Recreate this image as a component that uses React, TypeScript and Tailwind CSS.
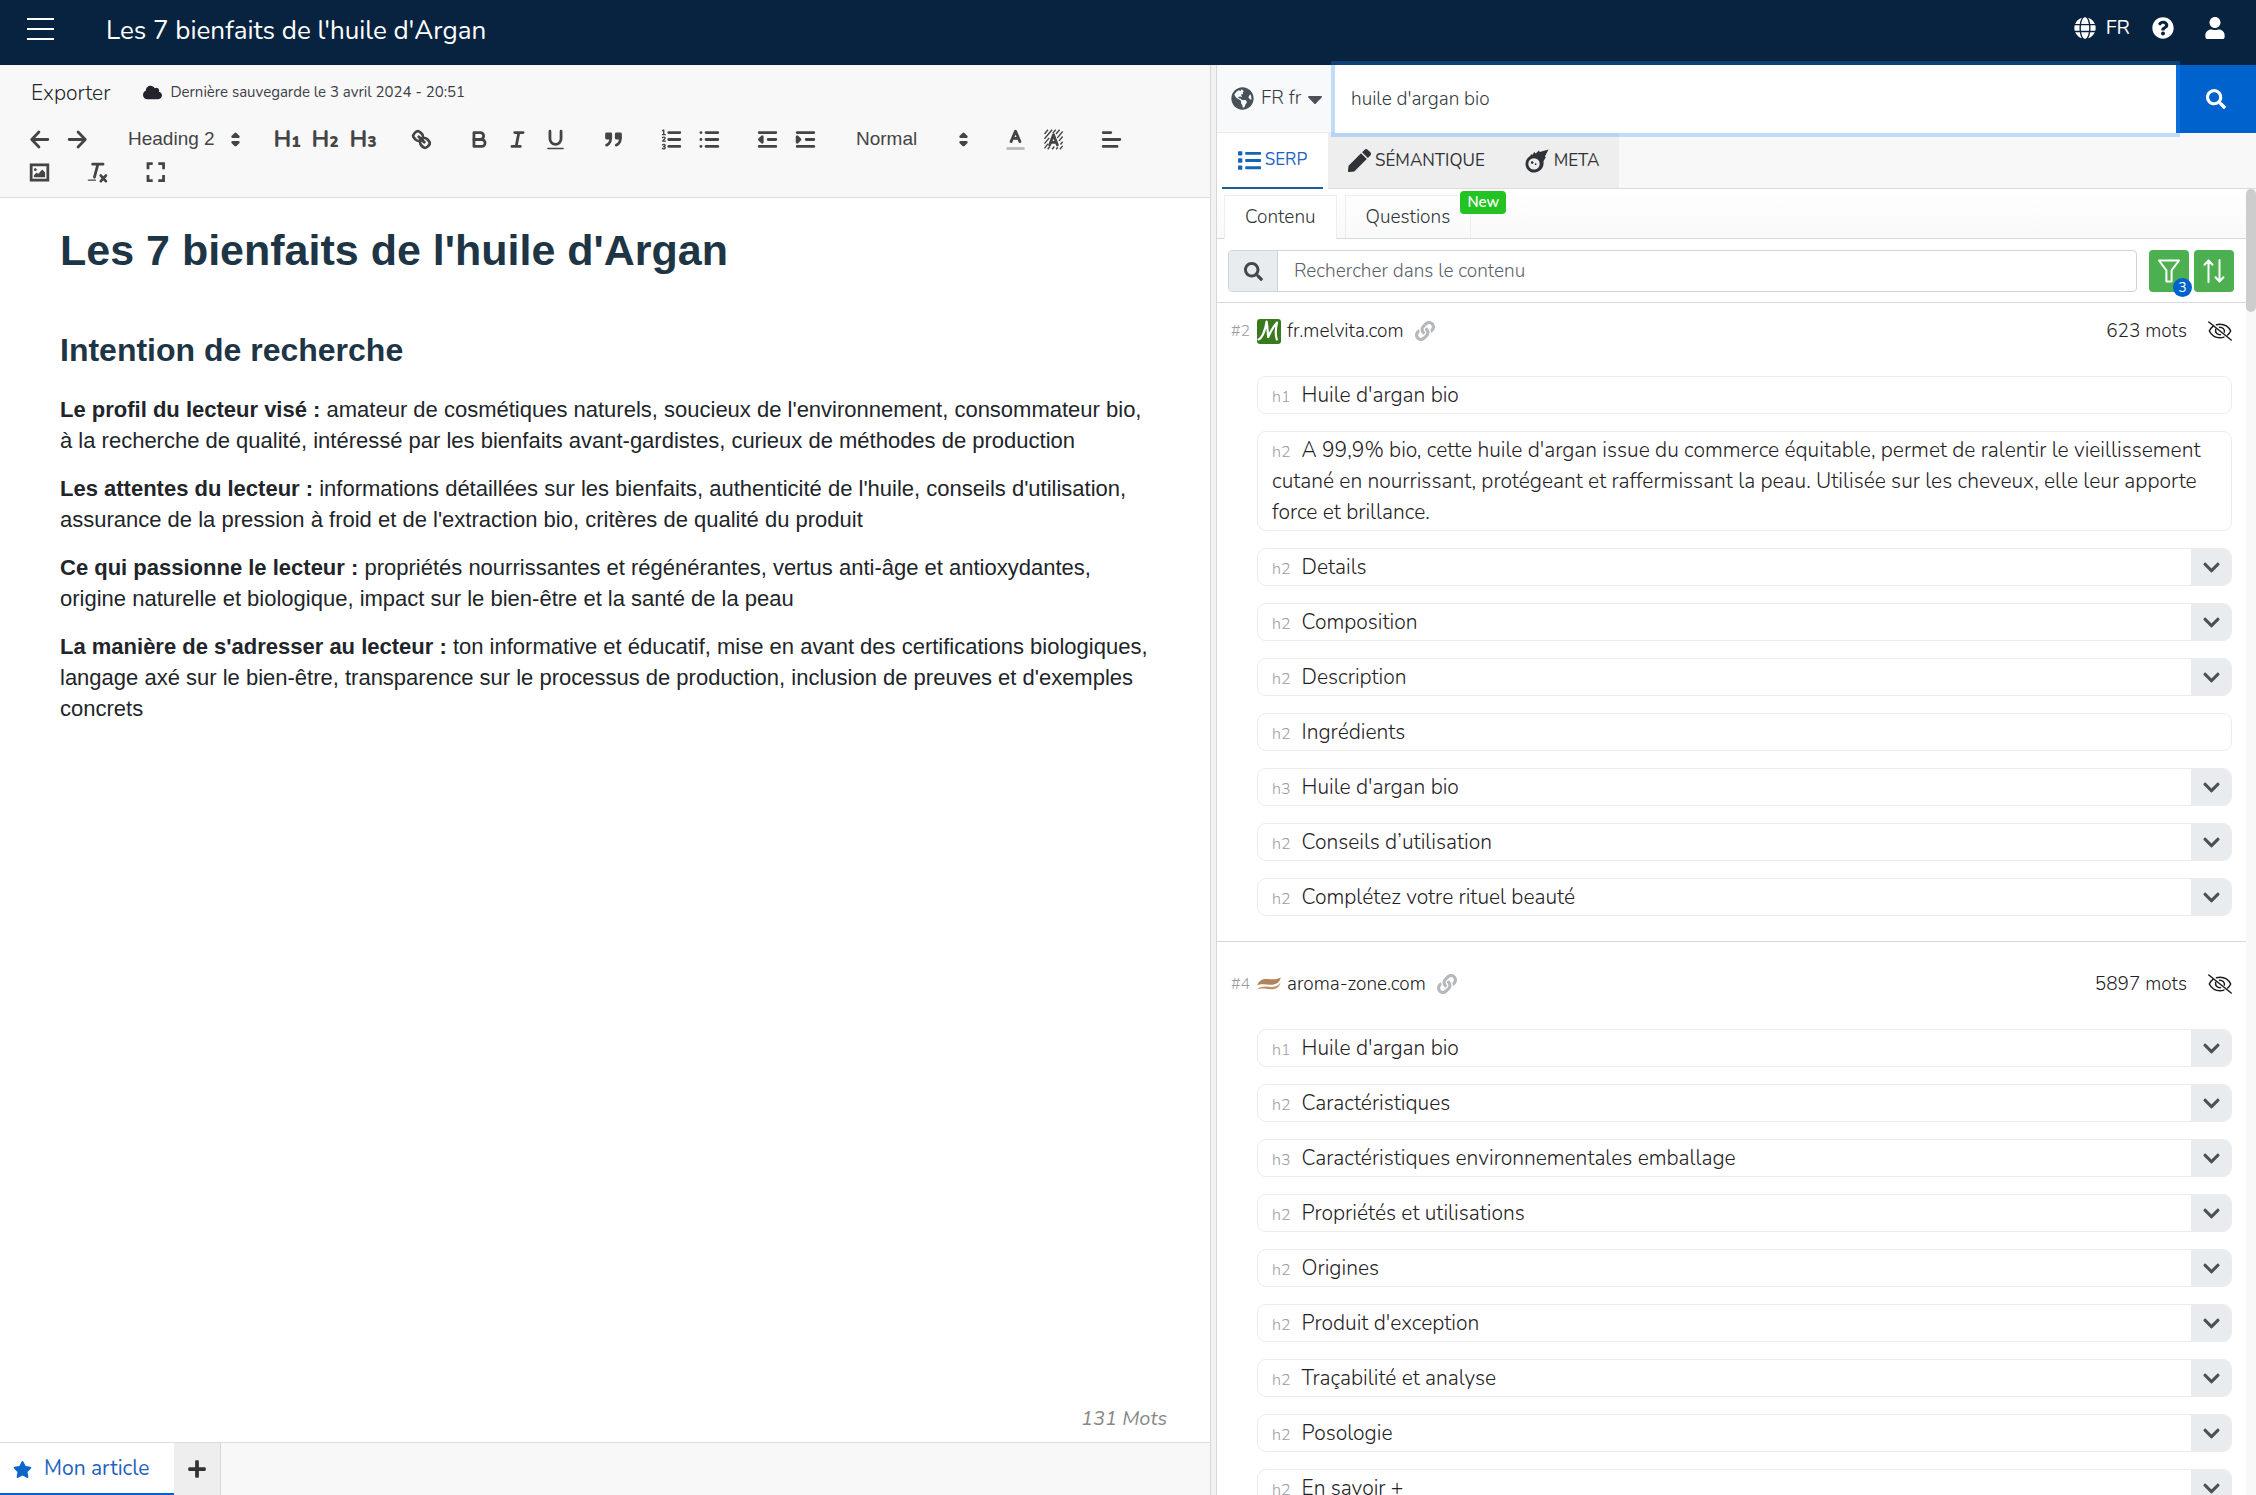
import type { ReactNode } from "react";
import {
  FaCaretDown,
  FaChevronDown,
  FaCloud,
  FaGlobe,
  FaGlobeAmericas,
  FaLink,
  FaList,
  FaPen,
  FaPlus,
  FaQuestionCircle,
  FaSearch,
  FaStar,
  FaUser,
} from "react-icons/fa";

/* ---------- Toolbar icons, drawn on an 18-unit grid ---------- */

function Glyph({ children }: { children: ReactNode }) {
  return (
    <svg
      viewBox="0 0 18 18"
      className="size-[25px] fill-none stroke-[#444] stroke-2"
      strokeLinecap="round"
      strokeLinejoin="round"
      aria-hidden="true"
    >
      {children}
    </svg>
  );
}

const solid = "fill-[#444] stroke-none";

const icons = {
  undo: (
    <Glyph>
      <path d="M15 9H3.8M8.6 3.6L3.4 9l5.2 5.4" />
    </Glyph>
  ),
  redo: (
    <Glyph>
      <path d="M3 9h11.2M9.4 3.6L14.6 9l-5.2 5.4" />
    </Glyph>
  ),
  link: (
    <Glyph>
      <path d="M7 7l4 4" />
      <path d="M8.9,4.577a3.476,3.476,0,0,1,.36,4.679A3.476,3.476,0,0,1,4.577,8.9C3.185,7.5,2.035,6.4,4.217,4.217S7.5,3.185,8.9,4.577Z" />
      <path d="M13.423,9.1a3.476,3.476,0,0,0-4.679-.36,3.476,3.476,0,0,0,.36,4.679c1.392,1.392,2.5,2.542,4.679.36S14.815,10.5,13.423,9.1Z" />
    </Glyph>
  ),
  bold: (
    <Glyph>
      <path d="M5,4H9.5A2.5,2.5,0,0,1,12,6.5v0A2.5,2.5,0,0,1,9.5,9H5Z" />
      <path d="M5,9h5.5A2.5,2.5,0,0,1,13,11.5v0A2.5,2.5,0,0,1,10.5,14H5Z" />
    </Glyph>
  ),
  italic: (
    <Glyph>
      <path d="M7 4h6M5 14h6M10 4L8 14" />
    </Glyph>
  ),
  underline: (
    <Glyph>
      <path d="M5,3V8.5a4,4,0,0,0,8,0V3" />
      <rect className={solid} x="3" y="15" width="12" height="1" rx="0.5" />
    </Glyph>
  ),
  quote: (
    <Glyph>
      <rect x="4" y="5" width="3" height="3" className="fill-[#444]" />
      <rect x="11" y="5" width="3" height="3" className="fill-[#444]" />
      <path d="M7,8c0,4.031-3,5-3,5M14,8c0,4.031-3,5-3,5" />
    </Glyph>
  ),
  ordered: (
    <Glyph>
      <path d="M7 4h8M7 9h8M7 14h8" />
      <path
        className="stroke-1"
        d="M2.5 2.6l.9-.4V5.4M2.5 5.5h2M2.5 7.7c.4-.6 1.9-.6 1.9.3 0 .7-1.3 1.1-1.8 2.2h2M2.5 12.8c.6-.5 1.9-.4 1.9.4 0 .6-.7.8-1.1.8.5 0 1.2.2 1.2.9 0 .9-1.4 1-2 .5"
      />
    </Glyph>
  ),
  bullet: (
    <Glyph>
      <path d="M6.5 4H15M6.5 9H15M6.5 14H15M2.8 4h.1M2.8 9h.1M2.8 14h.1" />
    </Glyph>
  ),
  outdent: (
    <Glyph>
      <path d="M3 4h12M3 14h12M9.5 9H15" />
      <path className="fill-[#444]" d="M5.2 7v4L3.2 9Z" />
    </Glyph>
  ),
  indent: (
    <Glyph>
      <path d="M3 4h12M3 14h12M9.5 9H15" />
      <path className="fill-[#444]" d="M3 7v4l2-2Z" />
    </Glyph>
  ),
  color: (
    <Glyph>
      <path d="M5.8 10.5L9 3l3.2 7.5M7 8.2h4" />
      <path className="stroke-[#bbb]" strokeLinecap="butt" d="M2.5 15.500h13" />
    </Glyph>
  ),
  background: (
    <Glyph>
      <path
        className="stroke-1"
        strokeLinecap="butt"
        d="M2.5 5l2.5-3M2.5 8.5L8 2M2.5 12l3.4-4.2M2.5 15.4L5 12.2M4.8 16l1.6-2M8.5 4.4L10.6 2M10.8 5L13.4 2M11.8 7.8L15.6 3.2M13 10l2.6-3.2M14 12.6l1.6-2M8 16l1.6-2M11 16l1-1.4M13.6 16l2-2.4"
      />
      <path d="M6.2 13L9 5.6l2.8 7.4M7.2 11h3.6" />
    </Glyph>
  ),
  align: (
    <Glyph>
      <path d="M3 4h5.5M3 9h12M3 14h10" />
    </Glyph>
  ),
  image: (
    <Glyph>
      <rect x="3" y="3.5" width="12" height="11" className="stroke-2" strokeLinejoin="miter" />
      <circle cx="6" cy="7" r="1" className={solid} />
      <path className={solid} d="M5 12.500V11l2-2 1 1 3-3.200 2 2.200v3.500Z" />
    </Glyph>
  ),
  clean: (
    <Glyph>
      <path d="M5.500 3H13M9.300 3L6.800 12.400" />
      <path d="M11.400 11.200l3.600 4M15 11.200l-3.600 4" />
      <rect className={solid} x="2" y="14" width="6" height="1" rx="0.5" />
    </Glyph>
  ),
  fullscreen: (
    <Glyph>
      <path
        strokeLinecap="butt"
        strokeLinejoin="miter"
        d="M3.600 6.600v-4H7M11 2.600h3.800v4M14.800 10.800v4H11M7 14.800H3.600v-4"
      />
    </Glyph>
  ),
};

function Tool({ label, children }: { label: string; children: ReactNode }) {
  return (
    <button type="button" aria-label={label} className="flex h-[33px] w-[38px] items-center justify-center text-[#444]">
      {children}
    </button>
  );
}

function Group({ children }: { children: ReactNode }) {
  return <div className="mr-5 flex items-center">{children}</div>;
}

function HeadingGlyph({ level }: { level: number }) {
  return (
    <span className="flex items-baseline leading-none">
      <span className="text-[23px] font-bold">H</span>
      <span className="text-[15px] font-black">{level}</span>
    </span>
  );
}

function Picker({ label, value }: { label: string; value: string }) {
  return (
    <div className="relative h-[33px] w-[132px]">
      <select
        aria-label={label}
        defaultValue={value}
        className="h-full w-full appearance-none bg-transparent pl-3 font-['Liberation_Sans',sans-serif] text-[19px] text-[#444]"
      >
        <option>{value}</option>
      </select>
      <svg viewBox="0 0 18 18" className="pointer-events-none absolute top-1 right-0 size-[25px] fill-[#444] stroke-[#444] stroke-2" strokeLinejoin="round" aria-hidden="true">
        <path d="M7 11l2 2 2-2ZM7 7l2-2 2 2Z" />
      </svg>
    </div>
  );
}

/* ---------- Left: article editor ---------- */

const paragraphs: [string, string][] = [
  [
    "Le profil du lecteur visé :",
    "amateur de cosmétiques naturels, soucieux de l'environnement, consommateur bio, à la recherche de qualité, intéressé par les bienfaits avant-gardistes, curieux de méthodes de production",
  ],
  [
    "Les attentes du lecteur :",
    "informations détaillées sur les bienfaits, authenticité de l'huile, conseils d'utilisation, assurance de la pression à froid et de l'extraction bio, critères de qualité du produit",
  ],
  [
    "Ce qui passionne le lecteur :",
    "propriétés nourrissantes et régénérantes, vertus anti-âge et antioxydantes, origine naturelle et biologique, impact sur le bien-être et la santé de la peau",
  ],
  [
    "La manière de s'adresser au lecteur :",
    "ton informative et éducatif, mise en avant des certifications biologiques, langage axé sur le bien-être, transparence sur le processus de production, inclusion de preuves et d'exemples concrets",
  ],
];

function Editor() {
  return (
    <section className="flex min-w-0 flex-[1210] flex-col bg-white">
      <div className="border-b border-[#dcdcdc] bg-[#f8f8f8] pb-2">
        <div className="flex h-[58px] items-center pb-1 pl-[31px] text-[#212529]">
          <button type="button" className="pt-1 text-[21px] font-light">Exporter</button>
          <FaCloud className="ml-[33px] size-[19px]" />
          <span className="ml-2 text-[15px] text-[#3c4146]">Dernière sauvegarde le 3 avril 2024 - 20:51</span>
        </div>
        <div className="flex pl-5">
          <Tool label="Annuler">{icons.undo}</Tool>
          <Tool label="Rétablir">{icons.redo}</Tool>
          <div className="mr-5 ml-5 flex">
            <Picker label="Titre" value="Heading 2" />
          </div>
          <Group>
            <Tool label="Titre 1"><HeadingGlyph level={1} /></Tool>
            <Tool label="Titre 2"><HeadingGlyph level={2} /></Tool>
            <Tool label="Titre 3"><HeadingGlyph level={3} /></Tool>
          </Group>
          <Group>
            <Tool label="Lien">{icons.link}</Tool>
          </Group>
          <Group>
            <Tool label="Gras">{icons.bold}</Tool>
            <Tool label="Italique">{icons.italic}</Tool>
            <Tool label="Souligné">{icons.underline}</Tool>
          </Group>
          <Group>
            <Tool label="Citation">{icons.quote}</Tool>
          </Group>
          <Group>
            <Tool label="Liste numérotée">{icons.ordered}</Tool>
            <Tool label="Liste à puces">{icons.bullet}</Tool>
          </Group>
          <Group>
            <Tool label="Diminuer le retrait">{icons.outdent}</Tool>
            <Tool label="Augmenter le retrait">{icons.indent}</Tool>
          </Group>
          <Group>
            <Picker label="Taille" value="Normal" />
          </Group>
          <Group>
            <Tool label="Couleur du texte">{icons.color}</Tool>
            <Tool label="Couleur de fond">{icons.background}</Tool>
          </Group>
          <Tool label="Alignement">{icons.align}</Tool>
        </div>
        <div className="flex pl-5">
          <Group>
            <Tool label="Image">{icons.image}</Tool>
          </Group>
          <Group>
            <Tool label="Effacer la mise en forme">{icons.clean}</Tool>
          </Group>
          <Tool label="Plein écran">{icons.fullscreen}</Tool>
        </div>
      </div>

      <article className="min-h-0 flex-1 overflow-hidden px-[60px] pt-6 font-['Liberation_Sans',sans-serif] text-[#212529]">
        <h1 className="text-[43px] leading-[56px] font-bold text-[#1e3545]">Les 7 bienfaits de l'huile d'Argan</h1>
        <h2 className="mt-[52px] text-[32px] leading-[40px] font-bold text-[#1e3545]">Intention de recherche</h2>
        <div className="mt-6 flex flex-col gap-[17px]">
          {paragraphs.map(([lead, text]) => (
            <p key={lead} className="text-[22px] leading-[31px]">
              <strong>{lead}</strong> {text}
            </p>
          ))}
        </div>
      </article>

      <p className="pr-[43px] pb-2 text-right text-[20px] text-[#888] italic">131 Mots</p>
      <div className="flex h-[53px] border-t border-[#d8dde0] bg-[#f8f8f8] text-[21px]">
        <button type="button" className="flex items-center border-b-2 border-[#0062cc] bg-white pt-[2px] pr-6 pl-[13px] text-[#1d62c0]">
          <FaStar className="mr-3 size-[19px] text-[#0b66cc]" />
          Mon article
        </button>
        <button type="button" aria-label="Ajouter" className="flex w-[47px] items-center justify-center border-r border-[#d8d8d8] bg-[#eeeeee] text-[#333]">
          <FaPlus className="size-5" />
        </button>
      </div>
    </section>
  );
}

/* ---------- Right: SERP analysis ---------- */

type Heading = { tag: string; text: string; open?: boolean };
type Result = { rank: number; site: string; words: number; logo: ReactNode; headings: Heading[] };

const melvitaLogo = (
  <svg viewBox="0 0 24 25" className="h-[25px] w-6" aria-hidden="true">
    <rect width="24" height="25" rx="3" fill="#3a7a1e" />
    <path d="M1.500 20.500C5 19.500 8.500 11 9.600 2.500c.9 4.500.9 10 1.600 15.500C13.500 13 16.500 7 20 3.500c-1.300 5.500-2 11.500-.2 17" fill="none" stroke="#fff" strokeWidth="2.200" strokeLinejoin="round" strokeLinecap="round" />
  </svg>
);

const aromaLogo = (
  <svg viewBox="0 0 24 25" className="h-[25px] w-6" aria-hidden="true">
    <path d="M0 13.500C2 8 6 6.500 11 7 16 7.500 20 7.500 23.800 5.500c-1.300 5-5 7.500-10.300 7.300C8.500 12.600 4 11.500 0 13.500Z" fill="#b08458" />
    <path d="M0 17.500c3-3.500 7-3.300 12-2.700 5 .5 8.500-.8 11.500-3.800-1.500 4.800-5.500 6.700-10.500 6.200C8 16.700 4 15.500 0 17.500Z" fill="#b9946c" />
  </svg>
);

const results: Result[] = [
  {
    rank: 2,
    site: "fr.melvita.com",
    words: 623,
    logo: melvitaLogo,
    headings: [
      { tag: "h1", text: "Huile d'argan bio" },
      {
        tag: "h2",
        text: "A 99,9% bio, cette huile d'argan issue du commerce équitable, permet de ralentir le vieillissement cutané en nourrissant, protégeant et raffermissant la peau. Utilisée sur les cheveux, elle leur apporte force et brillance.",
      },
      { tag: "h2", text: "Details", open: true },
      { tag: "h2", text: "Composition", open: true },
      { tag: "h2", text: "Description", open: true },
      { tag: "h2", text: "Ingrédients" },
      { tag: "h3", text: "Huile d'argan bio", open: true },
      { tag: "h2", text: "Conseils d’utilisation", open: true },
      { tag: "h2", text: "Complétez votre rituel beauté", open: true },
    ],
  },
  {
    rank: 4,
    site: "aroma-zone.com",
    words: 5897,
    logo: aromaLogo,
    headings: [
      { tag: "h1", text: "Huile d'argan bio", open: true },
      { tag: "h2", text: "Caractéristiques", open: true },
      { tag: "h3", text: "Caractéristiques environnementales emballage", open: true },
      { tag: "h2", text: "Propriétés et utilisations", open: true },
      { tag: "h2", text: "Origines", open: true },
      { tag: "h2", text: "Produit d'exception", open: true },
      { tag: "h2", text: "Traçabilité et analyse", open: true },
      { tag: "h2", text: "Posologie", open: true },
      { tag: "h2", text: "En savoir +", open: true },
    ],
  },
];

function EyeOff() {
  return (
    <svg viewBox="0 0 24 20" className="h-5 w-6 fill-none stroke-[#1c1c1c]" strokeWidth="1.500" strokeLinecap="round" aria-hidden="true">
      <path d="M.8 1l22.400 18" />
      <path d="M5 5.400C3.300 6.600 2.200 8.200 1.300 10c2 4 5.800 6.700 10.700 6.700 1.400 0 2.700-.2 3.900-.6M8.500 3.800C9.600 3.500 10.800 3.300 12 3.300c4.900 0 8.700 2.700 10.700 6.700-.8 1.600-1.800 2.900-3.100 4" />
      <path d="M7.700 8.200c-.8 3.300 1.500 5.600 4.800 5.600M11.500 6.200c3-.2 5.300 2.100 4.900 4.900" />
    </svg>
  );
}

function Comet() {
  return (
    <svg viewBox="0 0 24 24" className="size-6" aria-hidden="true">
      <path
        fill="currentColor"
        d="M23.500.4l-3.600 7.200 1 .3-2.400 4.400c1 6.400-3.600 11.200-9.400 11.200C4.300 23.500.5 19.600.5 14.900.5 11.200 2.700 8.500 5.400 6.800l.5-1.500 1.700.4 1.600-2.700 1.500 1.400 3.200-2.800.9 1.500Z"
      />
      <circle cx="9" cy="14.900" r="5.700" fill="#eeeeee" />
      <circle cx="7.200" cy="13.600" r="1.300" fill="currentColor" />
      <circle cx="10.600" cy="15.200" r="0.900" fill="currentColor" />
    </svg>
  );
}

function HeadingRow({ tag, text, open }: Heading) {
  return (
    <li className="flex overflow-hidden rounded-[9px] border border-[#ececec]">
      <p className="flex-1 pt-[3px] pb-[2px] pl-[14px] text-[21px] leading-[31px] font-light text-[#1f2224]">
        <span className="mr-[11px] text-[16px] leading-none text-[#9a9ea1]">{tag}</span>
        {text}
      </p>
      {open && (
        <button type="button" aria-label={`Déplier ${text}`} className="flex w-10 items-center justify-center bg-[#e9ecef] text-[#495057]">
          <FaChevronDown className="size-[19px]" />
        </button>
      )}
    </li>
  );
}

function SerpPanel() {
  return (
    <section className="flex min-w-0 flex-[1039] flex-col bg-white">
      <form className="flex h-[68px] shrink-0" onSubmit={(e) => e.preventDefault()}>
        <label className="flex w-[118px] shrink-0 items-center gap-[7px] border-b border-[#e9ecef] bg-[#f8f9fa] pl-[14px] text-[19px] font-light text-[#343a40]">
          <FaGlobeAmericas className="size-[23px] text-[#495057]" aria-hidden="true" />
          <span className="relative flex flex-1 items-center">
            <select aria-label="Pays et langue" className="w-full appearance-none bg-transparent">
              <option>FR fr</option>
            </select>
            <FaCaretDown className="pointer-events-none absolute right-2 size-6 text-[#495057]" aria-hidden="true" />
          </span>
        </label>
        <input
          aria-label="Mot-clé"
          defaultValue="huile d'argan bio"
          className="relative z-10 min-w-0 flex-1 bg-white pl-4 text-[19px] font-light text-[#343a40] shadow-[0_0_0_4px_rgba(38,143,255,0.27)] outline-none"
        />
        <button type="submit" aria-label="Rechercher" className="flex w-20 items-center justify-center bg-[#0062cc] text-white">
          <FaSearch className="size-5" />
        </button>
      </form>

      <nav className="flex h-14 shrink-0 border-b border-[#dcdcdc] bg-[#f8f8f8] text-[17px] text-[#2f3236]">
        <div className="-mb-px flex w-[111px] bg-white px-[5px]">
          <button type="button" className="flex flex-1 items-center justify-center gap-1 border-b-2 border-[#1b5f94] text-[#1b62c4]">
            <FaList className="size-[23px] text-[#1465b8]" />
            SERP
          </button>
        </div>
        <div className="flex bg-[#eeeeee] pr-5 pl-5">
          <button type="button" className="flex items-center gap-1">
            <FaPen className="size-[23px]" />
            SÉMANTIQUE
          </button>
          <button type="button" className="ml-10 flex items-center gap-[5px]">
            <Comet />
            META
          </button>
        </div>
      </nav>

      <div className="flex min-h-0 flex-1">
        <div className="min-w-0 flex-1 overflow-hidden">
          <div className="flex h-[50px] items-end gap-2 border-b border-[#d5dadd] bg-gradient-to-b from-white to-[#f9f9f9] pl-[7px] text-[19px] font-light text-[#30353a]">
            <button type="button" className="-mb-px h-11 border border-b-0 border-[#eceff1] bg-white px-5">
              Contenu
            </button>
            <button type="button" className="relative h-[43px] border border-b-0 border-[#eceff1] px-5">
              Questions
              <span className="absolute -top-[5px] -right-9 rounded-[4px] bg-[#22c322] px-[7px] text-[15px] leading-[23px] font-semibold text-white">New</span>
            </button>
          </div>

          <div className="flex items-center border-b border-[#d5d8da] pt-[11px] pr-3 pb-[10px] pl-[11px]">
            <div className="flex h-[42px] flex-1 overflow-hidden rounded-[4px] border border-[#ced4da]">
              <span className="flex w-[49px] items-center justify-center border-r border-[#ced4da] bg-[#e9ecef] text-[#42484e]">
                <FaSearch className="size-[19px]" />
              </span>
              <input
                aria-label="Rechercher dans le contenu"
                placeholder="Rechercher dans le contenu"
                className="min-w-0 flex-1 pl-4 text-[19px] font-light outline-none placeholder:text-[#5a6269]"
              />
            </div>
            <button type="button" aria-label="Filtrer" className="relative ml-3 flex h-[42px] w-10 items-center justify-center rounded-[4px] bg-[#4caf50]">
              <svg viewBox="0 0 24 24" className="size-6 fill-none stroke-white stroke-2" strokeLinejoin="round" aria-hidden="true">
                <path d="M2 1.500h20l-7.400 9.800V22.500H9.400V11.300Z" />
              </svg>
              <span className="absolute -right-[3px] -bottom-[5px] size-[19px] rounded-full bg-[#0062cc] text-[14px] leading-[19px] text-white">3</span>
            </button>
            <button type="button" aria-label="Trier" className="ml-[5px] flex h-[42px] w-10 items-center justify-center rounded-[4px] bg-[#4caf50]">
              <svg viewBox="0 0 24 24" className="size-6 fill-none stroke-white stroke-2" strokeLinecap="round" strokeLinejoin="round" aria-hidden="true">
                <path d="M6.500 23V1.500M2.500 5.800l4-4.300 4 4.300M17.500 1v21.500M13.500 18.200l4 4.300 4-4.300" />
              </svg>
            </button>
          </div>

          {results.map((r, i) => (
            <article key={r.rank} className={i === 0 ? "border-b border-[#d5d8da] px-[14px] pb-[25px]" : "px-[14px] pt-[14px]"}>
              <header className="flex h-14 items-center text-[19px] font-light text-[#1f2224]">
                <span className="w-[26px] text-[16px] text-[#9a9ea1]">#{r.rank}</span>
                {r.logo}
                <a href="#" className="ml-[6px]">{r.site}</a>
                <FaLink className="ml-[11px] size-5 text-[#b5b9bc]" />
                <span className="ml-auto">{r.words} mots</span>
                <button type="button" aria-label="Masquer" className="ml-[21px]">
                  <EyeOff />
                </button>
              </header>
              <ul className="mt-[17px] ml-[26px] flex flex-col gap-[17px]">
                {r.headings.map((h) => (
                  <HeadingRow key={h.tag + h.text} {...h} />
                ))}
              </ul>
            </article>
          ))}
        </div>
        <div className="w-[10px] shrink-0 bg-[#f8f8f8]">
          <div className="h-[123px] rounded-[5px] bg-[#cdcdcd]" />
        </div>
      </div>
    </section>
  );
}

export default function App() {
  return (
    <div className="flex h-screen flex-col overflow-hidden font-['Nunito','Noto_Sans',sans-serif]">
      <header className="flex h-[65px] shrink-0 items-center bg-[#08233f] pr-[30px] pb-1 pl-[27px] text-white">
        <button type="button" aria-label="Menu" className="flex w-[27px] flex-col gap-2 pb-1">
          <span className="h-[2px] bg-white" />
          <span className="h-[2px] bg-white" />
          <span className="h-[2px] bg-white" />
        </button>
        <h1 className="ml-[52px] text-[26px]">Les 7 bienfaits de l'huile d'Argan</h1>
        <div className="ml-auto flex items-center pb-[6px]">
          <button type="button" className="flex items-center gap-[10px] text-[20px]">
            <FaGlobe className="size-[22px]" />
            FR
          </button>
          <button type="button" aria-label="Aide" className="ml-[22px]">
            <FaQuestionCircle className="size-[22px]" />
          </button>
          <button type="button" aria-label="Compte" className="ml-[30px]">
            <FaUser className="size-[22px]" />
          </button>
        </div>
      </header>
      <main className="flex min-h-0 flex-1">
        <Editor />
        <div className="w-[7px] shrink-0 border-x border-[#d6d6d6] bg-[#f2f2f2]" />
        <SerpPanel />
      </main>
    </div>
  );
}
